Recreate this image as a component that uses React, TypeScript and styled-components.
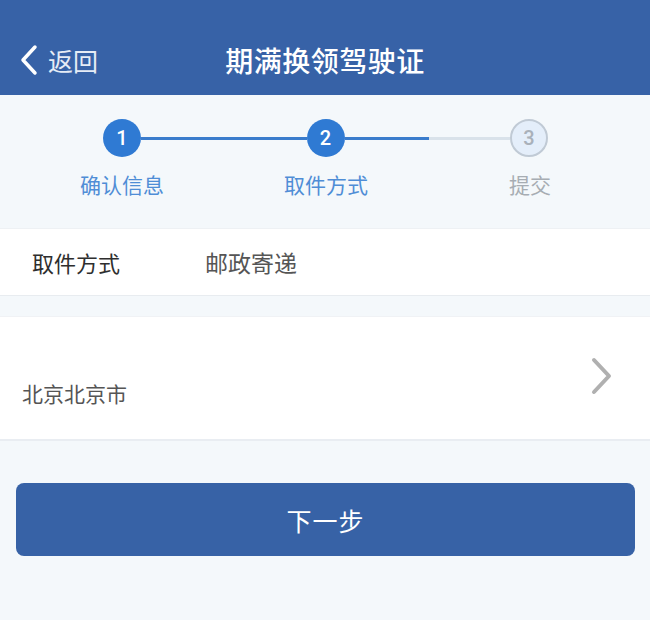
import React from "react";
import styled, { createGlobalStyle } from "styled-components";

const GlobalStyle = createGlobalStyle`
  html, body {
    margin: 0;
    padding: 0;
    background: #f4f8fb;
    font-family: "Noto Sans CJK SC", "Noto Sans", sans-serif;
  }
`;

const Page = styled.div`
  width: 650px;
  min-height: 620px;
  background: #f4f8fb;
`;

const Header = styled.div`
  height: 95px;
  background: #3762a7;
  display: grid;
  grid-template-columns: 1fr auto 1fr;
  align-items: center;
  box-sizing: border-box;
  color: #fff;
`;

const Back = styled.div`
  display: flex;
  align-items: center;
  gap: 10px;
  padding-left: 20px;
  font-size: 25px;
  color: #e6ecf6;
  margin-top: 24px;
`;

const Title = styled.div`
  font-size: 28px;
  font-weight: 500;
  letter-spacing: 0.5px;
  margin-top: 24px;
`;

const Steps = styled.div`
  height: 133px;
  padding-top: 24px;
  box-sizing: border-box;
`;

const Track = styled.div`
  display: flex;
  align-items: center;
  padding: 0 102px 0 103px;
`;

const Circle = styled.div<{ $active: boolean }>`
  width: 38px;
  height: 38px;
  border-radius: 50%;
  box-sizing: border-box;
  display: flex;
  align-items: center;
  justify-content: center;
  font-family: "Roboto", "Liberation Sans", sans-serif;
  font-size: 20px;
  font-weight: 500;
  background: ${(p) => (p.$active ? "#2f7ad3" : "#e4eefa")};
  border: ${(p) => (p.$active ? "none" : "2px solid #c0cad5")};
  color: ${(p) => (p.$active ? "#fff" : "#a9b1ba")};
  flex-shrink: 0;
`;

const Line = styled.div<{ $fill: number }>`
  flex: 1;
  height: 3px;
  background: linear-gradient(
    to right,
    #3a7ccc 0%,
    #3a7ccc ${(p) => p.$fill}%,
    #d9e2ea ${(p) => p.$fill}%,
    #d9e2ea 100%
  );
`;

const Labels = styled.div`
  display: grid;
  grid-template-columns: repeat(3, 204px);
  padding-left: 20px;
  margin-top: 12px;
`;

const Label = styled.div<{ $active: boolean }>`
  text-align: center;
  font-size: 21px;
  color: ${(p) => (p.$active ? "#4f8dd6" : "#a7adb3")};
`;

const Row = styled.div`
  background: #fff;
  height: 68px;
  display: flex;
  align-items: center;
  padding-left: 32px;
  border-top: 1px solid #eef1f4;
  border-bottom: 1px solid #e8ecf0;
  box-sizing: border-box;
`;

const RowLabel = styled.div`
  width: 173px;
  font-size: 22px;
  color: #2e2e2e;
`;

const RowValue = styled.div`
  font-size: 23px;
  color: #555;
`;

const Address = styled.div`
  margin-top: 20px;
  height: 125px;
  background: #fff;
  border-top: 1px solid #f0f2f5;
  border-bottom: 2px solid #e9edf2;
  box-sizing: border-box;
  display: flex;
  align-items: center;
  justify-content: space-between;
  padding: 0 36px 0 22px;
`;

const AddressText = styled.div`
  font-size: 21px;
  color: #555;
  margin-top: 30px;
`;

const Arrow = styled.svg`
  width: 24px;
  height: 40px;
  margin-top: -4px;
`;

const Footer = styled.div`
  padding: 42px 15px 0 16px;
`;

const NextButton = styled.button`
  width: 100%;
  height: 73px;
  border: none;
  border-radius: 8px;
  background: #3762a6;
  color: #fff;
  font-family: "Noto Sans CJK SC", "Noto Sans", sans-serif;
  font-size: 25px;
  letter-spacing: 1px;
`;

const steps = [
  { n: 1, text: "确认信息", active: true },
  { n: 2, text: "取件方式", active: true },
  { n: 3, text: "提交", active: false },
];

export default function App() {
  return (
    <Page>
      <GlobalStyle />
      <Header>
        <Back>
          <svg width="18" height="32" viewBox="0 0 18 32">
            <path d="M15 3 L3 16 L15 29" fill="none" stroke="#fff" strokeWidth="3.5" strokeLinecap="round" strokeLinejoin="round" />
          </svg>
          返回
        </Back>
        <Title>期满换领驾驶证</Title>
        <div />
      </Header>
      <Steps>
        <Track>
          <Circle $active>1</Circle>
          <Line $fill={100} />
          <Circle $active>2</Circle>
          <Line $fill={51} />
          <Circle $active={false}>3</Circle>
        </Track>
        <Labels>
          {steps.map((s) => (
            <Label key={s.n} $active={s.active}>
              {s.text}
            </Label>
          ))}
        </Labels>
      </Steps>
      <Row>
        <RowLabel>取件方式</RowLabel>
        <RowValue>邮政寄递</RowValue>
      </Row>
      <Address>
        <AddressText>北京北京市</AddressText>
        <Arrow viewBox="0 0 24 40">
          <path d="M4 4 L19 20 L4 36" fill="none" stroke="#b0b0b0" strokeWidth="4" strokeLinecap="round" strokeLinejoin="round" />
        </Arrow>
      </Address>
      <Footer>
        <NextButton>下一步</NextButton>
      </Footer>
    </Page>
  );
}
